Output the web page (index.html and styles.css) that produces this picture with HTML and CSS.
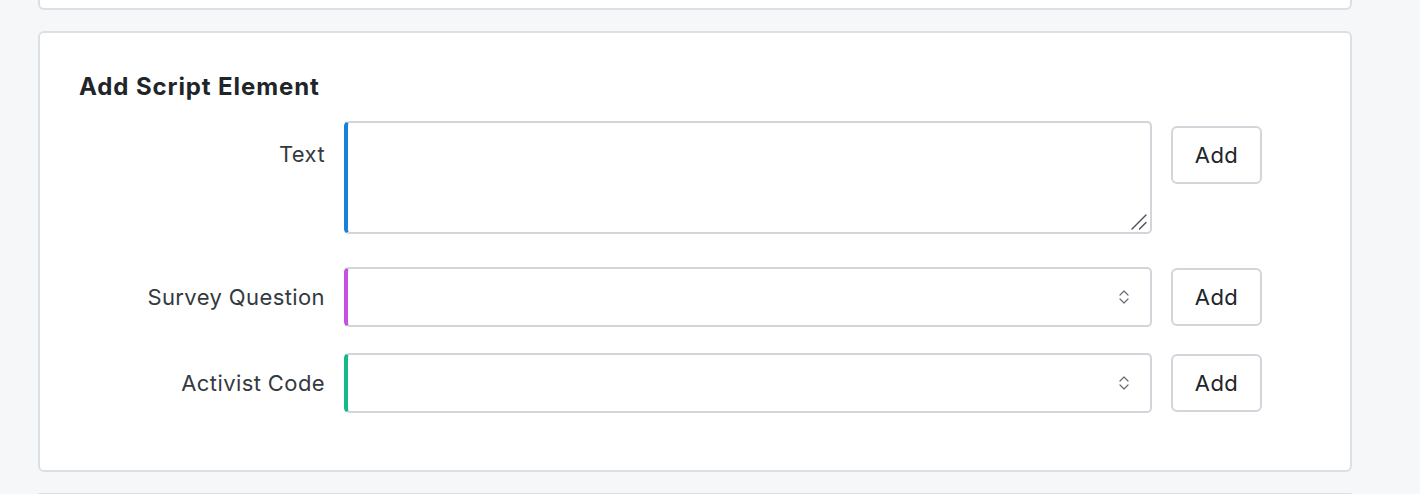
FILE: index.html
```html
<!DOCTYPE html>
<html>
<head>
<meta charset="utf-8">
<link rel="stylesheet" href="styles.css">
</head>
<body>
<div class="page">
  <div class="card card-prev"></div>
  <div class="card card-main">
    <h2 class="title">Add Script Element</h2>
    <div class="form">
      <div class="row row-text">
        <label class="label label-top">Text</label>
        <div class="text-wrap">
          <textarea class="field field-text"></textarea>
          <svg class="grip" width="16" height="16" viewBox="0 0 16 16"><path d="M1 15 L15 1 M8.5 15 L15 8.5" fill="none" stroke="#4a4e55" stroke-width="1.4" stroke-linecap="round"/></svg>
        </div>
        <button class="btn btn-top">Add</button>
      </div>

      <div class="row row-survey">
        <label class="label">Survey Question</label>
        <div class="field field-select field-survey">
          <svg class="chev" width="12" height="18" viewBox="0 0 12 18"><path d="M2 7 L6 3 L10 7 M2 11 L6 15 L10 11" fill="none" stroke="#6b7079" stroke-width="1.3" stroke-linecap="round" stroke-linejoin="round"/></svg>
        </div>
        <button class="btn">Add</button>
      </div>

      <div class="row">
        <label class="label">Activist Code</label>
        <div class="field field-select field-activist">
          <svg class="chev" width="12" height="18" viewBox="0 0 12 18"><path d="M2 7 L6 3 L10 7 M2 11 L6 15 L10 11" fill="none" stroke="#6b7079" stroke-width="1.3" stroke-linecap="round" stroke-linejoin="round"/></svg>
        </div>
        <button class="btn">Add</button>
      </div>
    </div>
  </div>
  <div class="card card-next"></div>
</div>
</body>
</html>
```
FILE: styles.css
```css
html, body {
  margin: 0;
  padding: 0;
  background: #f6f7f9;
  font-family: Inter, "Noto Sans", "Liberation Sans", sans-serif;
  color: #212529;
  overflow: hidden;
  height: 494px;
}
.page {
  padding-left: 38px;
  width: 1314px;
  display: flex;
  flex-direction: column;
  gap: 21px;
}
.card {
  background: #fff;
  border: 2px solid #dcdfe4;
  border-radius: 6px;
  box-sizing: border-box;
}
.card-prev {
  height: 10px;
  border-top: none;
  border-radius: 0 0 6px 6px;
}
.card-main {
  height: 441px;
  padding: 39px 0 0 39px;
}
.card-next {
  height: 2px;
  border-bottom: none;
  border-radius: 6px 6px 0 0;
}
.title {
  margin: 0;
  font-size: 24px;
  line-height: 30px;
  font-weight: 650;
  color: #212529;
  letter-spacing: 0.9px;
}
.form {
  margin-top: 19px;
  display: flex;
  flex-direction: column;
}
.row {
  display: grid;
  grid-template-columns: 246px 808px 91px;
  column-gap: 19px;
  align-items: center;
}
.row-text { margin-bottom: 33px; }
.row-survey { margin-bottom: 26px; }
.label {
  text-align: right;
  font-size: 22px;
  line-height: 28px;
  color: #343a40;
  letter-spacing: 0.4px;
}
.label-top {
  align-self: start;
  padding-top: 19px;
}
.text-wrap {
  position: relative;
  height: 113px;
}
.grip {
  position: absolute;
  right: 5px;
  bottom: 4px;
}
.field {
  box-sizing: border-box;
  border: 2px solid #d2d5da;
  border-left: 4px solid #1a7fd8;
  border-radius: 5px;
  background: #fff;
}
.field-text {
  height: 113px;
  width: 808px;
  margin: 0;
  resize: none;
  font: inherit;
  outline: none;
  display: block;
}
.field-select {
  height: 60px;
  display: flex;
  align-items: center;
  justify-content: flex-end;
  padding-right: 20px;
}
.field-survey { border-left-color: #c452de; }
.field-activist { border-left-color: #13b988; }
.chev { display: block; }
.btn {
  box-sizing: border-box;
  width: 91px;
  height: 58px;
  border: 2px solid #d2d5da;
  border-radius: 6px;
  background: #fff;
  font-family: inherit;
  font-size: 22px;
  letter-spacing: 0.4px;
  color: #212529;
  padding: 0;
}
.btn-top {
  align-self: start;
  margin-top: 5px;
}
```
